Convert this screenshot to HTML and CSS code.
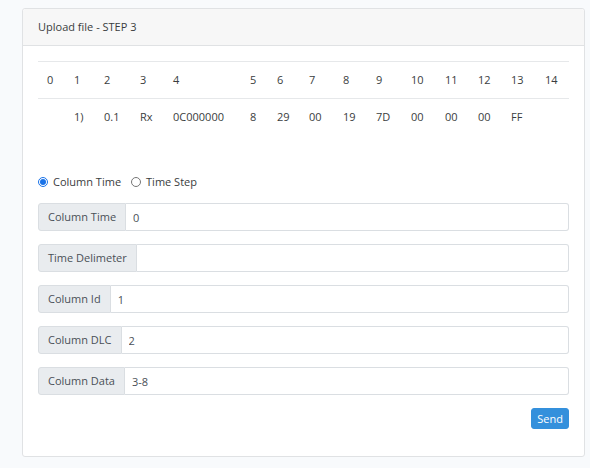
FILE: index.html
```html
<!DOCTYPE html>
<html lang="en">

<head>
    <meta charset="UTF-8">
    <meta name="viewport" content="width=device-width, initial-scale=1.0">
    <title>Upload file - STEP 3</title>
    <link rel="stylesheet" href="styles.css">
</head>

<body>
    <div class="card">
        <div class="card-header">Upload file - STEP 3</div>
        <div class="card-body">
            <table class="preview">
                <colgroup>
                    <col style="width: 27px">
                    <col style="width: 30px">
                    <col style="width: 36px">
                    <col style="width: 33px">
                    <col style="width: 77px">
                    <col style="width: 27px">
                    <col style="width: 32px">
                    <col style="width: 34px">
                    <col style="width: 33px">
                    <col style="width: 35px">
                    <col style="width: 34px">
                    <col style="width: 33px">
                    <col style="width: 33px">
                    <col style="width: 34px">
                    <col style="width: 33px">
                </colgroup>
                <tr>
                    <td>0</td><td>1</td><td>2</td><td>3</td><td>4</td><td>5</td><td>6</td><td>7</td>
                    <td>8</td><td>9</td><td>10</td><td>11</td><td>12</td><td>13</td><td>14</td>
                </tr>
                <tr>
                    <td></td><td>1)</td><td>0.1</td><td>Rx</td><td>0C000000</td><td>8</td><td>29</td><td>00</td>
                    <td>19</td><td>7D</td><td>00</td><td>00</td><td>00</td><td>FF</td><td></td>
                </tr>
            </table>

            <form class="upload-form">
                <div class="mode">
                    <label class="check">
                        <input type="radio" name="mode" checked> Column Time
                    </label>
                    <label class="check">
                        <input type="radio" name="mode"> Time Step
                    </label>
                </div>

                <div class="input-group">
                    <span class="input-group-text">Column Time</span>
                    <input class="form-control" type="text" value="0">
                </div>
                <div class="input-group">
                    <span class="input-group-text">Time Delimeter</span>
                    <input class="form-control" type="text" value="">
                </div>
                <div class="input-group">
                    <span class="input-group-text">Column Id</span>
                    <input class="form-control" type="text" value="1">
                </div>
                <div class="input-group">
                    <span class="input-group-text">Column DLC</span>
                    <input class="form-control" type="text" value="2">
                </div>
                <div class="input-group">
                    <span class="input-group-text">Column Data</span>
                    <input class="form-control" type="text" value="3-8">
                </div>

                <div class="actions">
                    <button class="btn" type="button">Send</button>
                </div>
            </form>
        </div>
    </div>
</body>

</html>
```

FILE: styles.css
```css
* {
    padding: 0;
    margin: 0;
    box-sizing: border-box;
    font-family: "Open Sans", "Noto Sans", sans-serif;
}

body {
    background-color: #f8fafc;
    color: #212529;
    font-size: 11px;
    line-height: 18px;
}

.card {
    margin: 8px 5px 0 22px;
    background-color: #ffffff;
    border: 1px solid #e0e2e4;
    border-radius: 3px;
}

.card-header {
    padding: 9px 15px;
    background-color: #f7f7f7;
    border-bottom: 1px solid #e0e2e4;
    border-radius: 3px 3px 0 0;
    color: #3a3d40;
}

.card-body {
    padding: 15px 15px 15px;
}

.preview {
    width: 100%;
    table-layout: fixed;
    border-collapse: collapse;
    margin-bottom: 38px;
}

.preview td {
    padding: 9px;
    border-top: 1px solid #e6e8ea;
    color: #3a3d40;
    white-space: nowrap;
}

.mode {
    display: flex;
    align-items: center;
    margin-bottom: 12px;
}

.check {
    display: flex;
    align-items: center;
    margin-right: 10px;
    color: #3a3d40;
}

.check input {
    width: 10px;
    height: 10px;
    margin-right: 5px;
    accent-color: #1a73e8;
}

.input-group {
    display: flex;
    height: 28px;
    margin-bottom: 13px;
}

.input-group-text {
    display: flex;
    align-items: center;
    padding: 0 9px 0 9px;
    background-color: #e9ecef;
    border: 1px solid #dadee2;
    border-radius: 3px 0 0 3px;
    color: #495057;
    white-space: nowrap;
}

.form-control {
    flex: 1;
    min-width: 0;
    padding: 0 7px;
    border: 1px solid #dadee2;
    border-left: none;
    border-radius: 0 3px 3px 0;
    background-color: #ffffff;
    color: #495057;
    font-size: 11px;
    outline: none;
}

.actions {
    display: flex;
    justify-content: flex-end;
    margin-bottom: 12px;
}

.btn {
    height: 21px;
    padding: 0 5px;
    background-color: #3490dc;
    border: 1px solid #3490dc;
    border-radius: 3px;
    color: #ffffff;
    font-size: 11px;
    line-height: 19px;
    cursor: pointer;
}
```
